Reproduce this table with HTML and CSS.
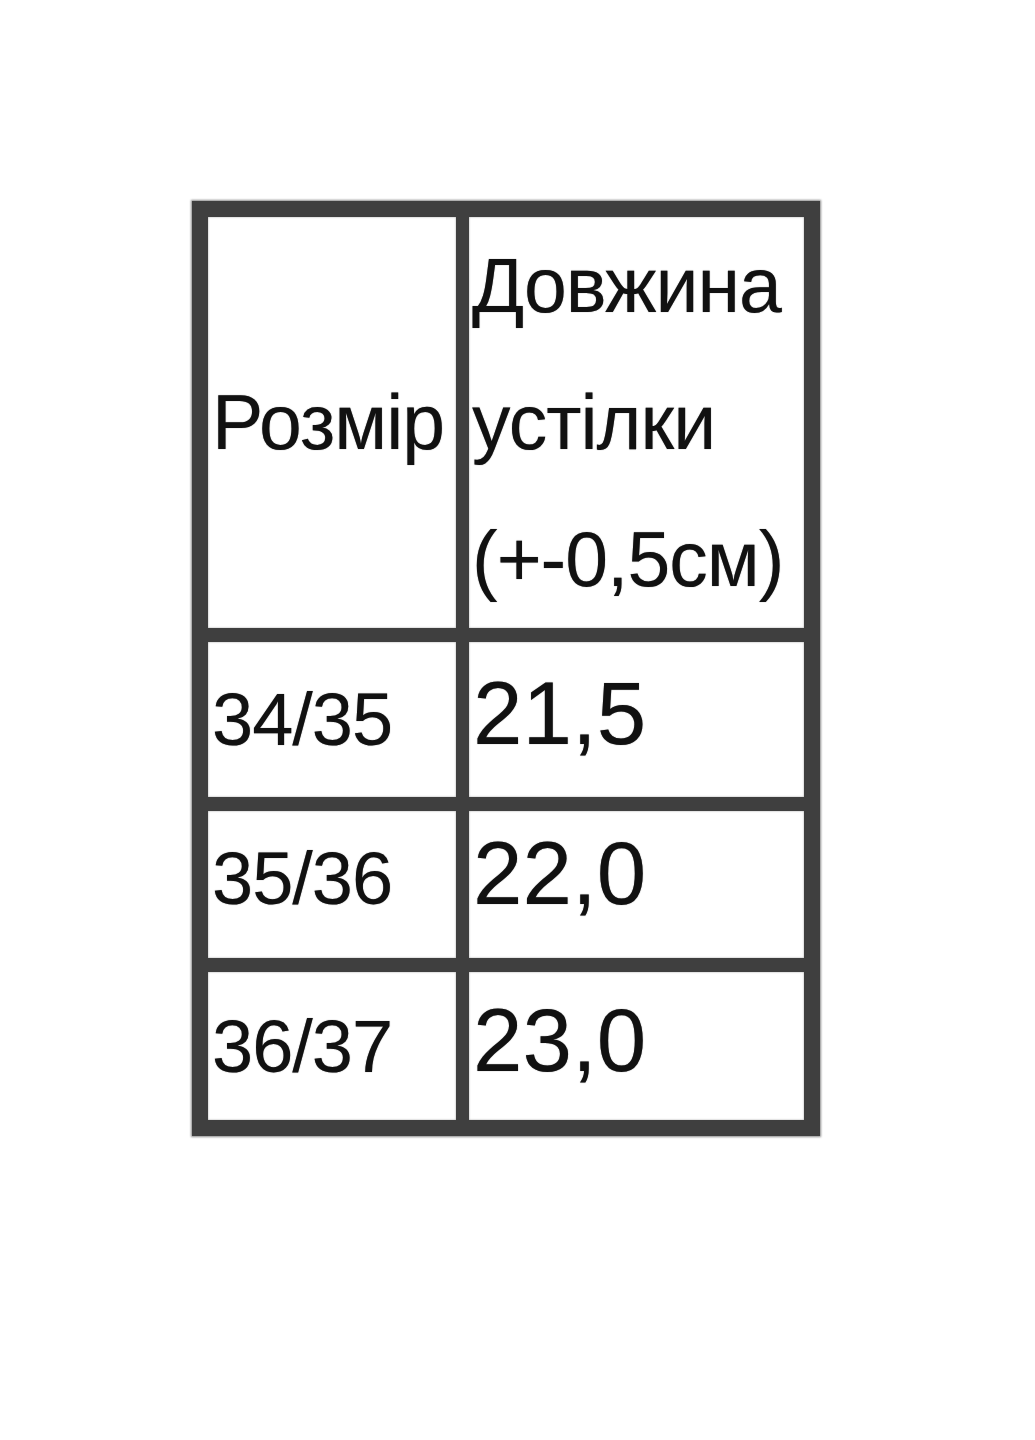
FILE: index.html
```html
<!DOCTYPE html>
<html lang="uk">
<head>
<meta charset="utf-8">
<title>Розмір</title>
<link rel="stylesheet" href="styles.css">
</head>
<body>
<div class="page">
  <div class="size-table">
    <div class="cell head-size"><span>Розмір</span></div>
    <div class="cell head-len">Довжина<br>устілки<br>(+-0,5см)</div>
    <div class="cell size">34/35</div>
    <div class="cell len">21,5</div>
    <div class="cell size mid">35/36</div>
    <div class="cell len mid">22,0</div>
    <div class="cell size">36/37</div>
    <div class="cell len">23,0</div>
  </div>
</div>
</body>
</html>
```
FILE: styles.css
```css
html, body {
  margin: 0;
  padding: 0;
  background: #ffffff;
}

.page {
  width: 1035px;
  height: 1440px;
  padding: 201px 0 0 192px;
  box-sizing: border-box;
}

.size-table {
  display: grid;
  grid-template-columns: 248px 335px;
  grid-template-rows: 411px 155px 147px 148px;
  column-gap: 13px;
  row-gap: 14px;
  padding: 16px;
  width: max-content;
  background: #3f3f3f;
  box-shadow: 0 0 2px 1px #8a8a8a;
  font-family: "Liberation Sans", Arial, sans-serif;
  color: #111111;
}

.cell {
  background: #ffffff;
  box-shadow: inset 0 0 2px #9a9a9a;
  padding-left: 4px;
  display: flex;
  align-items: center;
  white-space: nowrap;
  letter-spacing: -1px;
  text-shadow: 0 0 1px rgba(17, 17, 17, 0.6);
}

.head-size {
  font-size: 77px;
}

.head-len {
  display: block;
  font-size: 77px;
  line-height: 137px;
  padding-left: 3px;
}

.size {
  font-size: 74px;
  letter-spacing: -1px;
}

.len {
  font-size: 89px;
  letter-spacing: 0;
  padding-left: 4px;
  padding-bottom: 12px;
}

.size.mid {
  padding-bottom: 12px;
}

.len.mid {
  padding-bottom: 22px;
}
```
